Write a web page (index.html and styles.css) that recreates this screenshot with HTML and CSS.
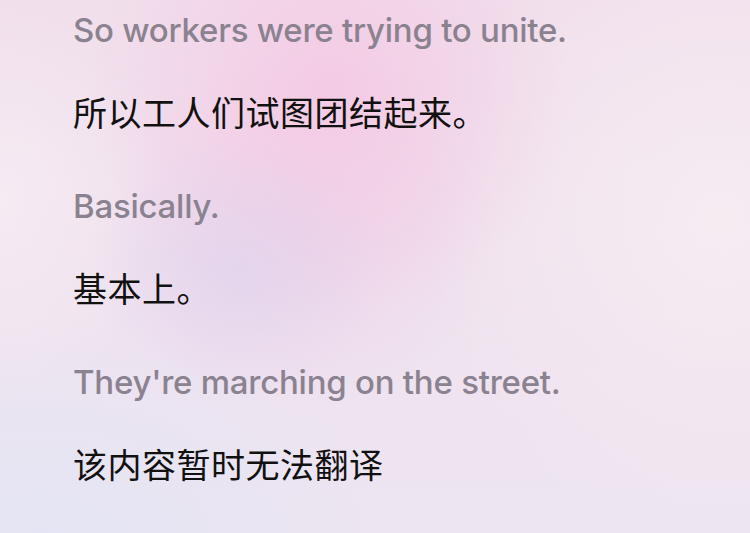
FILE: index.html
```html
<!DOCTYPE html>
<html lang="zh">
<head>
<meta charset="utf-8">
<link rel="stylesheet" href="styles.css">
</head>
<body>
<main class="transcript">
  <section class="pair">
    <p class="en">So workers were trying to unite.</p>
    <p class="zh">所以工人们试图团结起来。</p>
  </section>
  <section class="pair">
    <p class="en">Basically.</p>
    <p class="zh">基本上。</p>
  </section>
  <section class="pair">
    <p class="en">They're marching on the street.</p>
    <p class="zh">该内容暂时无法翻译</p>
  </section>
</main>
</body>
</html>
```
FILE: styles.css
```css
html, body {
  margin: 0;
  height: 100%;
}
body {
  width: 750px;
  height: 533px;
  overflow: hidden;
  background-color: #f0e7f1;
  background-image:
    radial-gradient(ellipse 150px 130px at 240px 270px, rgba(224, 212, 238, 0.75), rgba(224, 212, 238, 0) 100%),
    radial-gradient(ellipse 240px 230px at 330px 90px, rgba(244, 200, 227, 0.9), rgba(244, 200, 227, 0) 100%),
    radial-gradient(ellipse 200px 180px at 300px 230px, rgba(240, 208, 230, 0.7), rgba(240, 208, 230, 0) 100%),
    radial-gradient(ellipse 160px 200px at 0px 200px, rgba(246, 236, 244, 0.9), rgba(246, 236, 244, 0) 100%),
    radial-gradient(ellipse 340px 220px at 40px 540px, rgba(228, 229, 244, 1), rgba(228, 229, 244, 0) 100%),
    radial-gradient(ellipse 300px 320px at 720px 220px, rgba(246, 236, 242, 0.95), rgba(246, 236, 242, 0) 100%),
    linear-gradient(180deg, #f1dfec 0%, #ede5f1 100%);
  font-family: Inter, "Noto Sans", "Noto Sans CJK SC", sans-serif;
}
.transcript {
  display: flex;
  flex-direction: column;
  padding: 8px 0 0 73px;
  gap: 48px;
}
.pair {
  display: flex;
  flex-direction: column;
  gap: 36px;
}
.en {
  margin: 0;
  font-size: 33px;
  font-weight: 500;
  line-height: 44px;
  color: #8b8290;
  letter-spacing: -0.25px;
}
.zh {
  margin: 0;
  font-family: "Noto Sans CJK SC", sans-serif;
  font-size: 34px;
  line-height: 48px;
  color: #111111;
  letter-spacing: 0.5px;
}
```
